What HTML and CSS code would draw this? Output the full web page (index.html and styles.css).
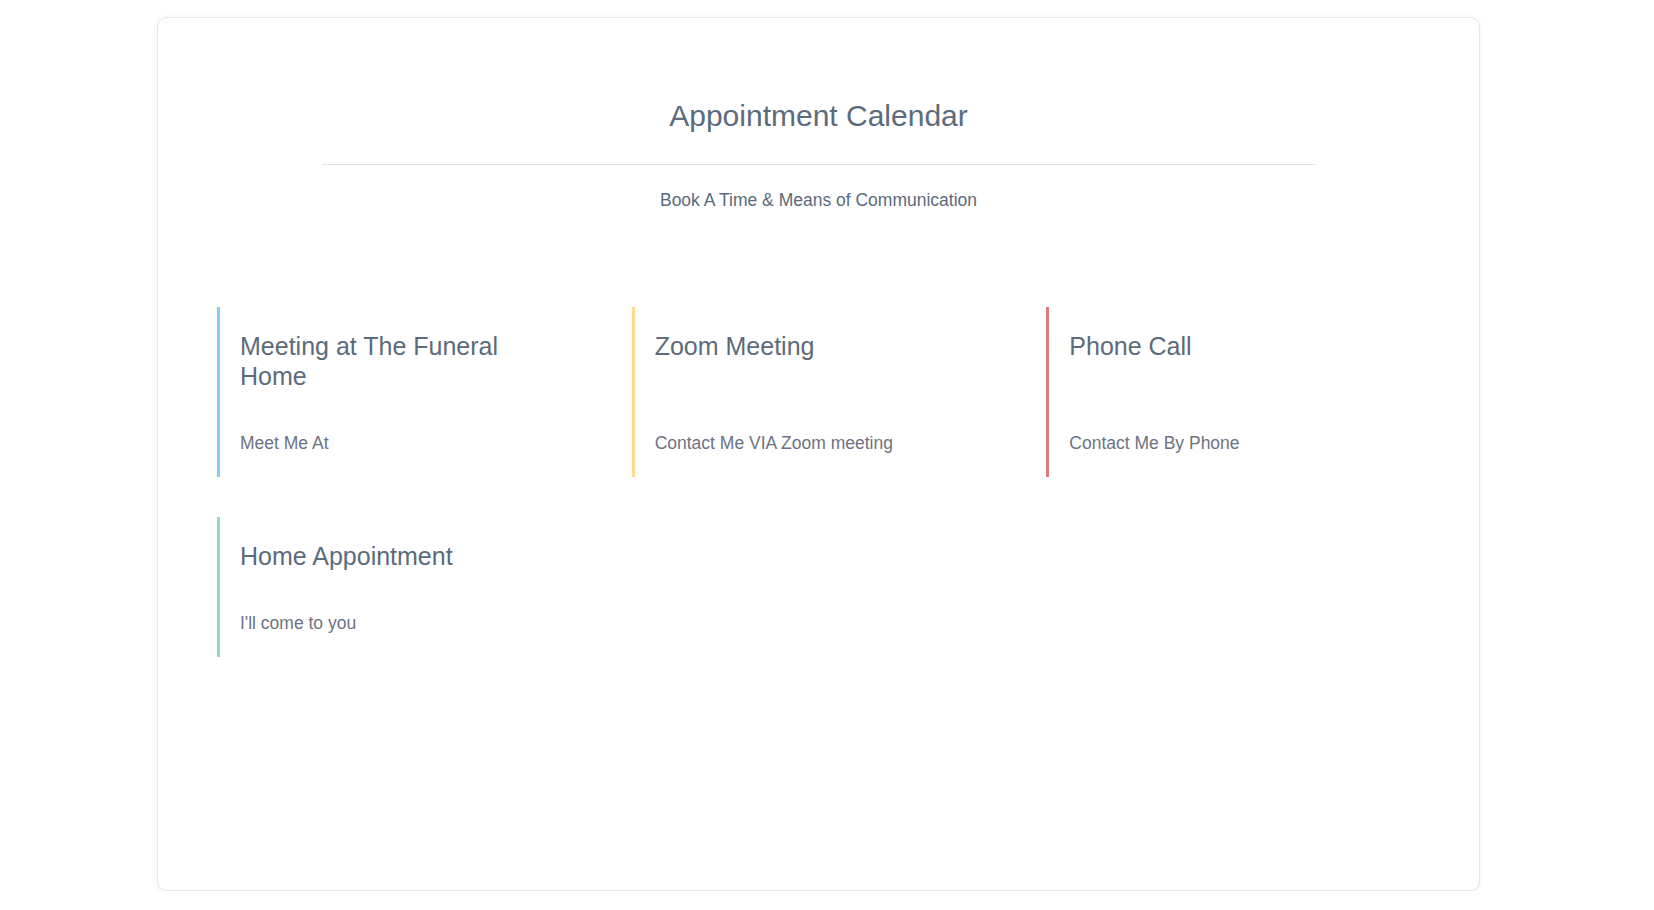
FILE: index.html
```html
<!doctype html>
<html lang="en">
<head>
	<meta charset="UTF-8" />
	<title>Appointment Calendar</title>
<link rel="stylesheet" href="styles.css">
</head>
<body>
	<div id="page">
		<section class="panel">
			<header class="panel-head">
				<h1>Appointment Calendar</h1>
				<hr />
				<p>Book A Time &amp; Means of Communication</p>
			</header>
			<div class="types">
				<a href="javascript:;" class="type blue">
					<h3>Meeting at The Funeral Home</h3>
					<p>Meet Me At</p>
				</a>
				<a href="javascript:;" class="type yellow">
					<h3>Zoom Meeting</h3>
					<p>Contact Me VIA Zoom meeting</p>
				</a>
				<a href="javascript:;" class="type red">
					<h3>Phone Call</h3>
					<p>Contact Me By Phone</p>
				</a>
				<a href="javascript:;" class="type green">
					<h3>Home Appointment</h3>
					<p>I'll come to you</p>
				</a>
			</div>
		</section>
	</div>
</body>
</html>
```

FILE: styles.css
```css
body,h1,h3,p{
	margin: 0;
	padding: 0;
}
body{
	background: #fff;
	font-family: "Liberation Sans", Arial, sans-serif;
	color: #5b6b7b;
}
#page{
	width: 1637px;
	padding-top: 17px;
}
.panel{
	width: 1321px;
	height: 872px;
	margin: 0 auto;
	border: 1px solid #e6e6e6;
	border-radius: 10px;
	box-shadow: 0 1px 6px rgba(0,0,0,.06);
	background: #fff;
}
.panel-head{
	padding-top: 79px;
	text-align: center;
}
.panel-head h1{
	font-size: 30px;
	line-height: 38px;
	font-weight: normal;
	color: #5b6b7b;
}
.panel-head hr{
	width: 994px;
	margin: 29px auto 0;
	border: 0;
	border-top: 1px solid #e2e2e2;
}
.panel-head p{
	margin-top: 22px;
	font-size: 17.5px;
	line-height: 27px;
	color: #5b6b7b;
}

/* appointment types, one coloured bar each */
.types{
	display: grid;
	grid-template-columns: repeat(3, 1fr);
	row-gap: 40px;
	width: 1244px;
	margin: 93px 0 0 59px;
}
.type{
	display: flex;
	flex-direction: column;
	padding: 24px 20px 20px 20px;
	border-left: 3px solid #ccc;
	text-decoration: none;
}
.type h3{
	max-width: 300px;
	margin-bottom: 39px;
	font-size: 25px;
	line-height: 30px;
	font-weight: normal;
	color: #5b6b7b;
}
.type p{
	margin-top: auto;
	font-size: 17.5px;
	line-height: 27px;
	color: #6e7283;
}
.blue{ border-color: #81cdf3; }
.yellow{ border-color: #fadc8e; }
.red{ border-color: #e57c7c; }
.green{ border-color: #8ed9bd; }
```
